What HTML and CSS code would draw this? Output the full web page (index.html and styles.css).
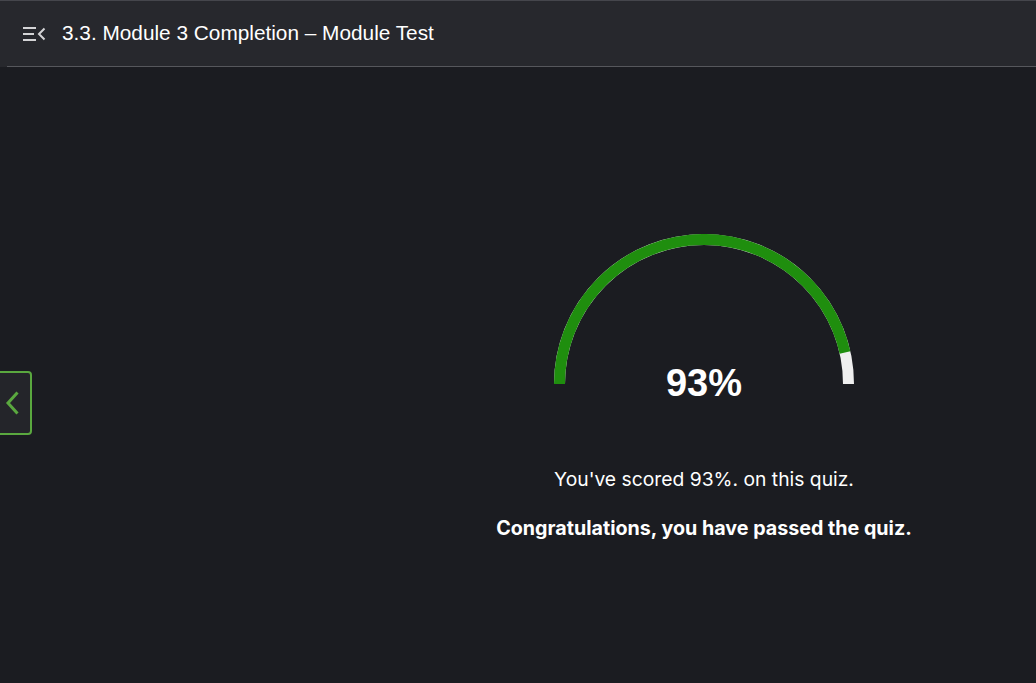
FILE: index.html
```html
<!DOCTYPE html>
<html lang="en">
<head>
<meta charset="utf-8">
<title>Module Test</title>
<link rel="stylesheet" href="styles.css">
</head>
<body>
<div class="app">
  <header class="topbar">
    <svg class="menu-icon" width="24" height="16" viewBox="0 0 24 16" aria-hidden="true">
      <rect x="1" y="1" width="13" height="2" fill="#d4d4d6"/>
      <rect x="1" y="7" width="11" height="2" fill="#d4d4d6"/>
      <rect x="1" y="13" width="13" height="2" fill="#d4d4d6"/>
      <path d="M22.5 2.5 L17 8 L22.5 13.5" fill="none" stroke="#d4d4d6" stroke-width="2"/>
    </svg>
    <h1 class="title">3.3. Module 3 Completion – Module Test</h1>
  </header>
  <main class="content">
    <button class="prev-btn" aria-label="Previous">
      <svg width="16" height="26" viewBox="0 0 16 26" aria-hidden="true">
        <path d="M12.5 2.5 L3 13 L12.5 23.5" fill="none" stroke="#5aa83f" stroke-width="3"/>
      </svg>
    </button>
    <section class="result">
      <div class="gauge">
        <svg width="310" height="160" viewBox="0 0 310 160" aria-hidden="true">
          <path d="M10.5 150 A144.5 144.5 0 0 1 299.5 150" fill="none" stroke="#efefef" stroke-width="11"/>
          <path d="M10.5 150 A144.5 144.5 0 0 1 296.02 118.48" fill="none" stroke="#1f8e0e" stroke-width="11"/>
        </svg>
        <div class="score">93%</div>
      </div>
      <p class="line">You've scored 93%. on this quiz.</p>
      <p class="line strong">Congratulations, you have passed the quiz.</p>
    </section>
  </main>
</div>
</body>
</html>
```
FILE: styles.css
```css
* { box-sizing: border-box; }
html, body {
  margin: 0;
  padding: 0;
  height: 100%;
  background: #1b1c21;
  font-family: "Liberation Sans", Arial, sans-serif;
  color: #ffffff;
}
.app {
  display: flex;
  flex-direction: column;
  height: 683px;
  overflow: hidden;
}
.topbar {
  height: 67px;
  flex: none;
  background: #27282d;
  border-top: 1px solid #45464c;
  display: flex;
  align-items: center;
  padding-left: 22px;
  position: relative;
}
.topbar::after {
  content: "";
  position: absolute;
  left: 7px;
  right: 0;
  bottom: 0;
  height: 1px;
  background: #56575c;
}
.menu-icon {
  flex: none;
  margin-top: -1px;
}
.title {
  margin: 0 0 0 16px;
  font-size: 20.8px;
  font-weight: 400;
  color: #ffffff;
  letter-spacing: 0;
  line-height: 24px;
  margin-top: -2px;
}
.content {
  flex: 1;
  display: flex;
  position: relative;
}
.prev-btn {
  position: absolute;
  left: -4px;
  top: 304px;
  width: 36px;
  height: 64px;
  background: #24252a;
  border: 2px solid #5aa83f;
  border-radius: 4px;
  display: flex;
  align-items: center;
  justify-content: flex-start;
  padding: 0 0 0 7px;
  cursor: pointer;
}
.result {
  flex: 1;
  display: flex;
  flex-direction: column;
  align-items: center;
  padding-top: 167px;
  padding-left: 372px;
}
.gauge {
  position: relative;
  width: 310px;
  height: 160px;
}
.gauge svg { display: block; }
.score {
  position: absolute;
  left: 0;
  right: 0;
  top: 129px;
  text-align: center;
  font-size: 38px;
  font-weight: 700;
  line-height: 40px;
}
.line {
  margin: 0;
  font-family: Inter, "Liberation Sans", Arial, sans-serif;
  font-size: 19.3px;
  line-height: 22px;
  text-align: center;
}
.result .line:first-of-type { margin-top: 74px; }
.line.strong {
  font-size: 19.7px;
  font-weight: 700;
  margin-top: 27px;
}
```
